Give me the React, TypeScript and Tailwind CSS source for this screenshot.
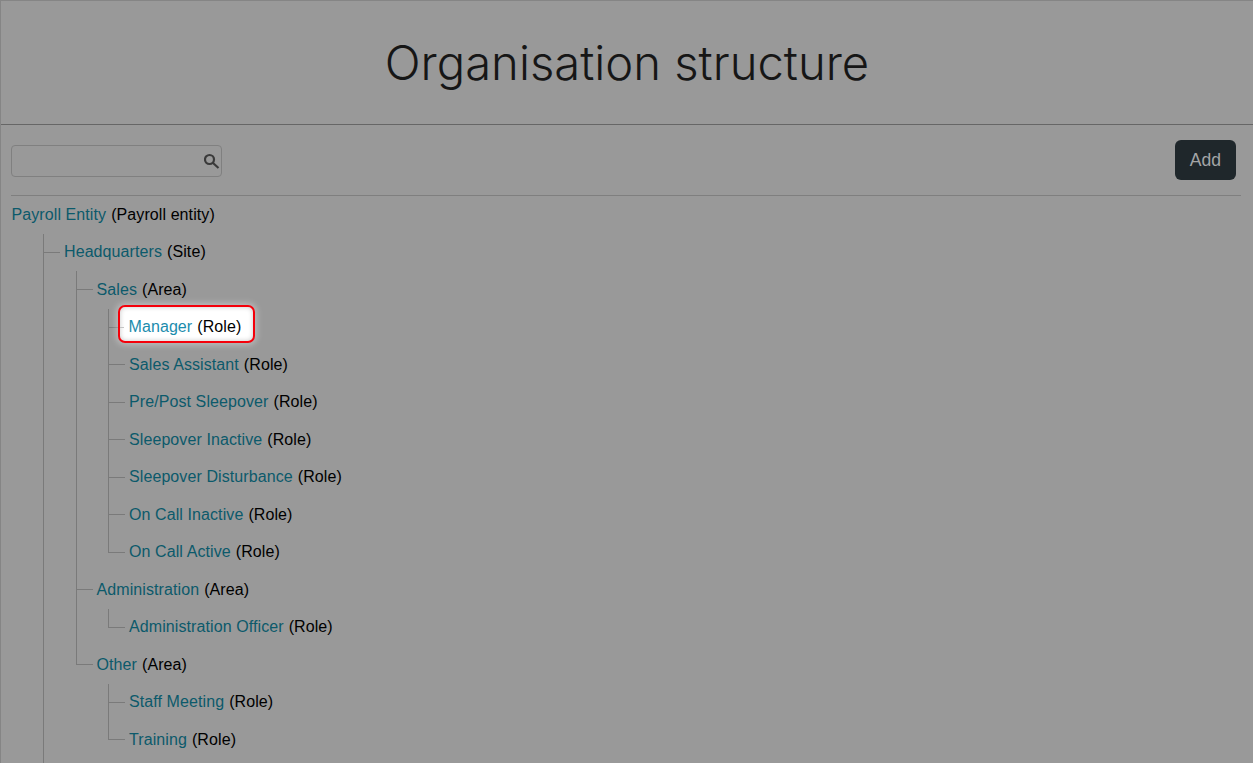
import React from "react";

interface TreeNode {
  name: string;
  kind: string;
  active?: boolean;
  children?: TreeNode[];
}

const tree: TreeNode = {
  name: "Payroll Entity",
  kind: "Payroll entity",
  children: [
    {
      name: "Headquarters",
      kind: "Site",
      children: [
        {
          name: "Sales",
          kind: "Area",
          children: [
            { name: "Manager", kind: "Role", active: true },
            { name: "Sales Assistant", kind: "Role" },
            { name: "Pre/Post Sleepover", kind: "Role" },
            { name: "Sleepover Inactive", kind: "Role" },
            { name: "Sleepover Disturbance", kind: "Role" },
            { name: "On Call Inactive", kind: "Role" },
            { name: "On Call Active", kind: "Role" },
          ],
        },
        {
          name: "Administration",
          kind: "Area",
          children: [{ name: "Administration Officer", kind: "Role" }],
        },
        {
          name: "Other",
          kind: "Area",
          children: [
            { name: "Staff Meeting", kind: "Role" },
            { name: "Training", kind: "Role" },
          ],
        },
      ],
    },
  ],
};

const Label: React.FC<{ node: TreeNode }> = ({ node }) => {
  if (node.active) {
    return (
      <span className="relative z-10 mb-[7px] ml-[-11px] box-border flex h-[38px] items-center whitespace-nowrap rounded-[7px] border-[2.5px] border-[#f5000a] bg-white pl-[8.5px] pr-[12px] pt-[7px] shadow-[0_0_6px_2px_rgba(255,255,255,0.35),inset_0_0_5px_rgba(0,0,0,0.22)]">
        <span className="absolute left-0 top-[20px] h-px w-[3.5px] bg-[#c4c4c4]" />
        <a className="text-[#1b8cad]">{node.name}</a>
        <span className="ml-[5px] text-black">({node.kind})</span>
      </span>
    );
  }
  return (
    <span className="whitespace-nowrap">
      <a className="text-[#0c5a6b]">{node.name}</a>
      <span className="ml-[5px] text-black">({node.kind})</span>
    </span>
  );
};

const Branch: React.FC<{ node: TreeNode; last: boolean; trunk?: boolean }> = ({ node, last, trunk }) => (
  <li className={(last ? "pl-px" : "border-l border-[#7a7a7a]") + (trunk ? " pb-[30px]" : "")}>
    <div className="flex h-[37.5px] items-center">
      <div
        className={
          last
            ? "mr-[4px] ml-[-1px] h-[19px] w-[17px] self-start border-b border-l border-[#7a7a7a]"
            : "mr-[4px] h-[19px] w-[16px] self-start border-b border-[#7a7a7a]"
        }
      />
      <Label node={node} />
    </div>
    {node.children && (
      <ul className="ml-[31.5px]">
        {node.children.map((item, i) => (
          <Branch key={item.name} node={item} last={i === node.children!.length - 1} />
        ))}
      </ul>
    )}
  </li>
);

export default function App() {
  return (
    <div className="h-[763px] overflow-hidden border-l border-t border-[#858585] bg-[#999999] font-['Liberation_Sans',Arial,sans-serif] text-base tracking-[0.09px]">
      <header className="flex h-[124px] items-center justify-center border-b border-[#666666]">
        <h1 className="mt-[2px] font-['Inter',sans-serif] text-[47.2px] font-light tracking-normal text-[#161616]">
          Organisation structure
        </h1>
      </header>

      <div className="pl-[10px] pr-[12px]">
        <div className="flex h-[71px] items-center justify-between border-b border-[#7f7f7f] pr-[5px]">
          <div className="mt-[2px] flex h-[32px] w-[211px] items-center justify-end rounded-[4px] border border-[#808080] pr-px">
            <svg width="16" height="16" viewBox="0 0 16 16" fill="none" stroke="#3a3a3a" strokeWidth="2.2">
              <circle cx="5.5" cy="6.5" r="4.5" />
              <path d="M9 10l5.5 5" />
            </svg>
          </div>
          <button className="h-[40px] w-[61px] rounded-[6px] bg-[#1f272b] text-[17.6px] tracking-normal text-[#a3a5a6]">
            Add
          </button>
        </div>

        <div>
          <div className="flex h-[37.5px] items-center pl-[0.5px]">
            <Label node={tree} />
          </div>
          <ul className="ml-[32px]">
            <Branch node={tree.children![0]} last={false} trunk />
          </ul>
        </div>
      </div>
    </div>
  );
}
